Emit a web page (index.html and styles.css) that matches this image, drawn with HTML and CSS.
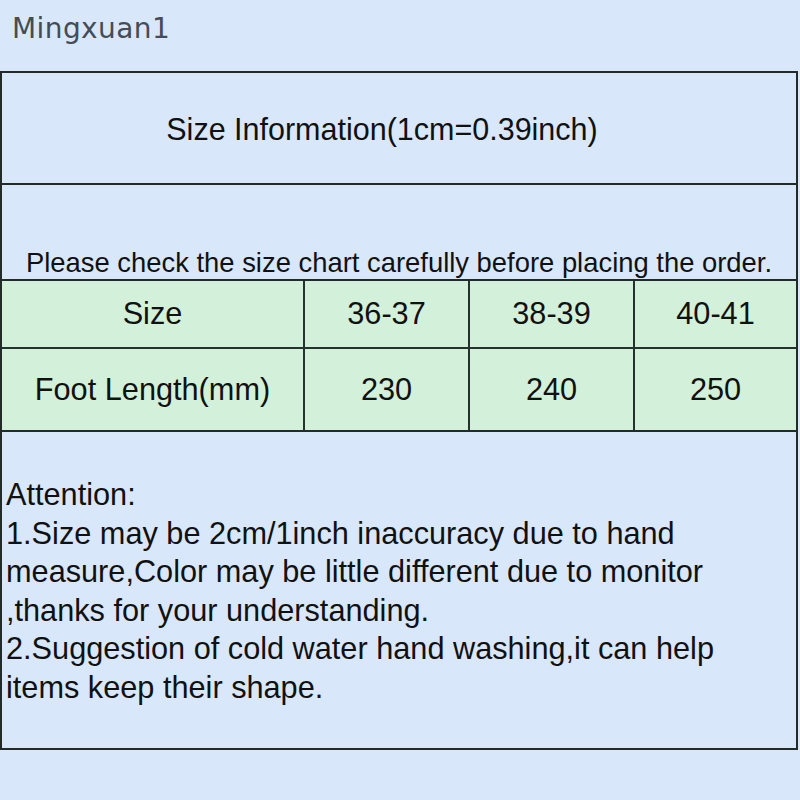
FILE: index.html
```html
<!DOCTYPE html>
<html>
<head>
<meta charset="utf-8">
<link rel="stylesheet" href="styles.css">
</head>
<body>
<div class="page">
  <div class="brand">Mingxuan1</div>
  <div class="chart">
    <div class="title">Size Information(1cm=0.39inch)</div>
    <div class="note">Please check the size chart carefully before placing the order.</div>
    <div class="grid">
      <div class="cell first r1">Size</div>
      <div class="cell r1">36-37</div>
      <div class="cell r1">38-39</div>
      <div class="cell last r1">40-41</div>
      <div class="cell first r2">Foot Length(mm)</div>
      <div class="cell r2">230</div>
      <div class="cell r2">240</div>
      <div class="cell last r2">250</div>
    </div>
    <div class="attention">
      <p>Attention:</p>
      <p>1.Size may be 2cm/1inch inaccuracy due to hand measure,Color may be little different due to monitor ,thanks for your understanding.</p>
      <p>2.Suggestion of cold water hand washing,it can help items keep their shape.</p>
    </div>
  </div>
</div>
</body>
</html>
```

FILE: styles.css
```css
html, body {
  margin: 0;
  padding: 0;
  background: #d9e7fb;
}
.page {
  width: 800px;
  height: 800px;
  display: flex;
  flex-direction: column;
  font-family: "Liberation Sans", Arial, sans-serif;
  color: #111;
}
.brand {
  height: 71px;
  box-sizing: border-box;
  padding: 12px 0 0 12px;
  font-family: "DejaVu Sans", sans-serif;
  font-size: 28px;
  line-height: 34px;
  letter-spacing: 0.4px;
  color: #454c55;
}
.chart {
  width: 798px;
  height: 679px;
  box-sizing: border-box;
  border: 2px solid #222a2a;
  display: flex;
  flex-direction: column;
}
.title {
  height: 112px;
  box-sizing: border-box;
  border-bottom: 2px solid #222a2a;
  display: flex;
  align-items: center;
  justify-content: center;
  font-size: 30.5px;
  padding: 2px 34px 0 0;
}
.note {
  height: 96px;
  box-sizing: border-box;
  border-bottom: 2px solid #222a2a;
  display: flex;
  align-items: flex-end;
  justify-content: center;
  font-size: 27.4px;
  line-height: 30px;
  padding-bottom: 1px;
}
.grid {
  display: grid;
  grid-template-columns: 303px 165px 165px 1fr;
  grid-template-rows: 68px 81px;
  background: #d3f0da;
  border-bottom: 2px solid #222a2a;
}
.cell {
  display: flex;
  align-items: center;
  justify-content: center;
  font-size: 30.7px;
  border-right: 2px solid #24332c;
  box-sizing: border-box;
}
.cell.last {
  border-right: none;
}
.cell.r1 {
  border-bottom: 2px solid #24332c;
}
.attention {
  flex: 1;
  padding: 44px 0 0 4px;
  font-size: 30.7px;
  line-height: 38.6px;
}
.attention p {
  margin: 0;
  width: 770px;
}
```
